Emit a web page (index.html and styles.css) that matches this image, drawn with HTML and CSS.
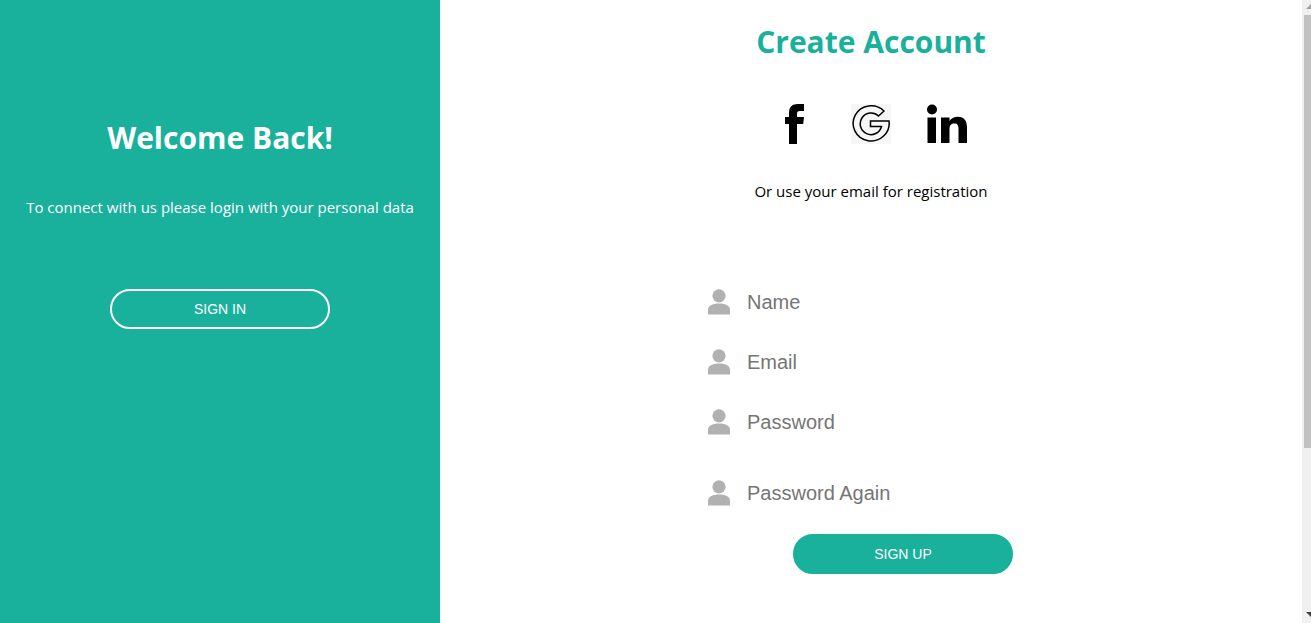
FILE: index.html
```html
<!DOCTYPE html>
<html lang="en">
<head>
<meta charset="utf-8">
<title>Create Account</title>
<link rel="stylesheet" href="styles.css">
</head>
<body>
<svg class="symbols" aria-hidden="true">
  <symbol id="user" viewBox="0 0 22 26">
    <circle cx="11" cy="6.8" r="6.6"/>
    <path d="M0 25.5v-4.2C0 16.8 4 14.6 11 14.6s11 2.2 11 6.7v4.2z"/>
  </symbol>
</svg>
<div class="page">
  <aside class="welcome">
    <h1 class="title">Welcome Back!</h1>
    <p class="lead">To connect with us please login with your personal data</p>
    <button class="btn btn-outline" type="button">SIGN IN</button>
  </aside>
  <main class="register">
    <h1 class="title title-accent">Create Account</h1>
    <nav class="social">
      <a href="#" aria-label="Facebook">
        <svg viewBox="0 0 40 40"><path d="M14 40V20h-4v-7h4V9C14 3 17 0 23 0h6v7h-4c-2.500 0-3 1-3 3v3h7l-.8 7H22v20z"/></svg>
      </a>
      <a class="google" href="#" aria-label="Google">
        <svg viewBox="0 0 40 40"><path class="line" d="M33 7A18 17.600 0 1 0 38 17H19.500v5.500h11A10.800 10.800 0 1 1 27.500 12z"/></svg>
      </a>
      <a href="#" aria-label="LinkedIn">
        <svg viewBox="0 0 40 40"><circle cx="5" cy="5.500" r="5"/><path d="M.5 13.500h8.500V39H.500zM14 13.500h8.500v3.500c1.500-2.500 4.500-4.200 8.300-4.200 6.700 0 9.200 4.200 9.200 10.700V39h-8.500V25c0-3.500-1-5.500-4-5.500-3.500 0-5 2-5 5.500v14H14z"/></svg>
      </a>
    </nav>
    <p class="hint">Or use your email for registration</p>
    <form class="form">
      <div class="field">
        <label for="name" aria-label="Name"><svg class="user"><use href="#user"/></svg></label>
        <input id="name" type="text" placeholder="Name">
      </div>
      <div class="field">
        <label for="email" aria-label="Email"><svg class="user"><use href="#user"/></svg></label>
        <input id="email" type="email" placeholder="Email">
      </div>
      <div class="field">
        <label for="password" aria-label="Password"><svg class="user"><use href="#user"/></svg></label>
        <input id="password" type="password" placeholder="Password">
      </div>
      <div class="field field-repeat">
        <label for="again" aria-label="Password Again"><svg class="user"><use href="#user"/></svg></label>
        <input id="again" type="password" placeholder="Password Again">
      </div>
      <button class="btn btn-solid" type="submit">SIGN UP</button>
    </form>
  </main>
  <div class="scrollbar" aria-hidden="true">
    <svg class="arrow arrow-up" viewBox="0 0 9 15"><path d="M4 9l5-5v5z"/></svg>
    <div class="track"><div class="thumb"></div></div>
    <svg class="arrow" viewBox="0 0 9 15"><path d="M4 4h5v5z"/></svg>
  </div>
</div>
</body>
</html>
```
FILE: styles.css
```css
* { box-sizing: border-box; }

body {
  margin: 0;
  background: #fff;
  color: #000;
  font-family: "Segoe UI", "Open Sans", "Noto Sans", sans-serif;
  font-size: 15px;
  line-height: 20px;
}

.symbols { display: none; }

.page {
  display: grid;
  grid-template-columns: 440px 1fr 9px;
  min-height: 100vh;
}

.welcome,
.register {
  display: flex;
  flex-direction: column;
  align-items: center;
}

.welcome {
  padding-top: 116px;
  background: #19b09c;
  color: #fff;
}

.register { padding-top: 20px; }

.title {
  margin: 0;
  font-size: 30px;
  font-weight: 700;
  line-height: 44px;
}

.title-accent { color: #19b09c; }

.lead { margin: 37px 0 72px; }

.btn {
  width: 220px;
  height: 40px;
  border: 2px solid #fff;
  border-radius: 20px;
  color: #fff;
  font: 14px "Liberation Sans", Arial, sans-serif;
}

.btn-outline { background: transparent; }

.btn-solid {
  align-self: center;
  border-color: #19b09c;
  background: #19b09c;
}

.social {
  display: flex;
  gap: 36px;
  margin-top: 40px;
}

.social a {
  display: block;
  width: 40px;
  height: 40px;
  color: #000;
}

.social svg {
  display: block;
  width: 100%;
  height: 100%;
}

.social .google { background: #f6f6f6; }

.line {
  fill: none;
  stroke: #000;
  stroke-width: 1.5;
}

.hint { margin: 37px 0 71px; }

.form {
  display: flex;
  flex-direction: column;
  width: 400px;
  margin-left: 64px;
}

.field {
  display: flex;
  align-items: center;
  gap: 15px;
  height: 60px;
  padding-left: 5px;
}

.field-repeat { margin: 11px 0; }

.user {
  display: block;
  width: 22px;
  height: 26px;
  fill: #b1b1b1;
}

.field input {
  flex: 1;
  min-width: 0;
  padding: 0 2px;
  border: 0;
  outline: 0;
  background: transparent;
  font: 20px "Liberation Sans", Arial, sans-serif;
}

.field input::placeholder { color: #757575; }

.scrollbar {
  display: flex;
  flex-direction: column;
  background: #f0f0f0;
}

.arrow {
  width: 9px;
  height: 15px;
  fill: #404040;
}

.arrow-up { fill: #a0a0a0; }

.track {
  flex: 1;
  padding-left: 2px;
}

.thumb {
  height: 73%;
  background: #c1c1c1;
}
```
